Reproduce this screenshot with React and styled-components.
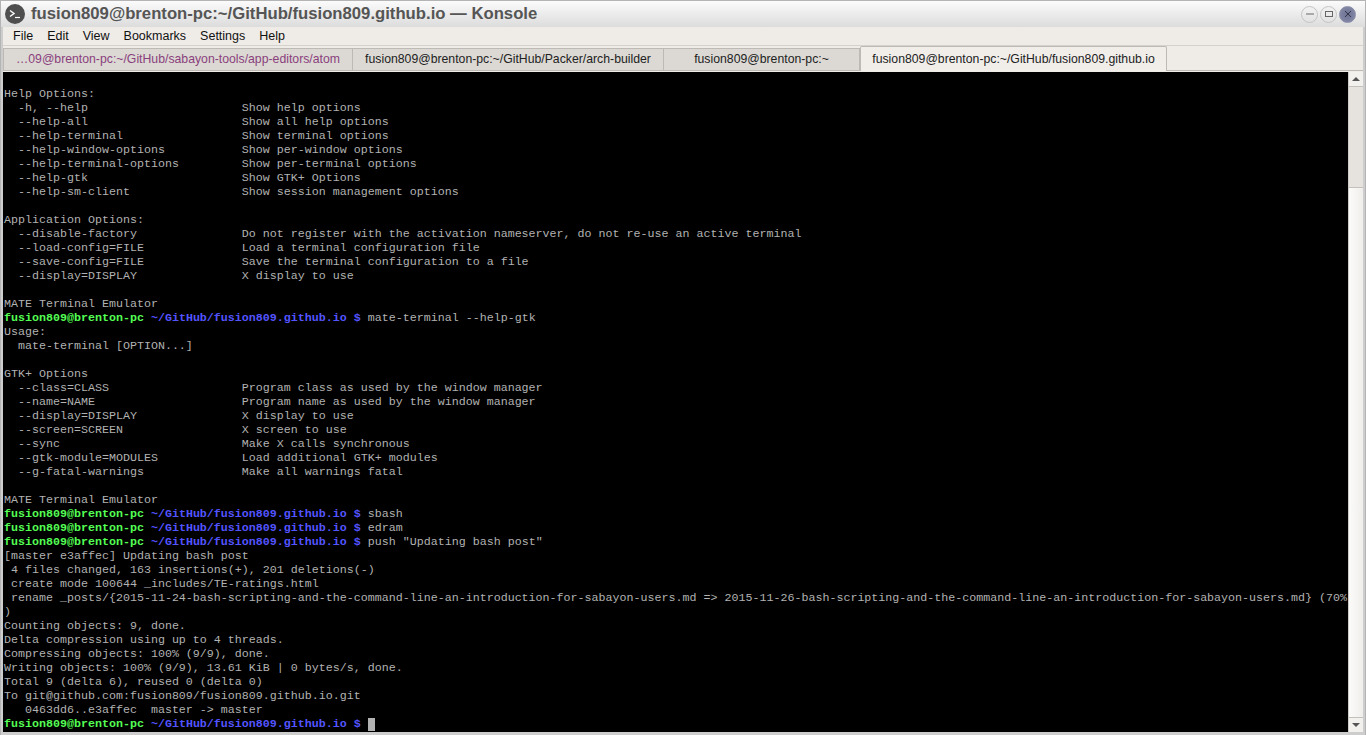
import React from "react";
import styled, { createGlobalStyle } from "styled-components";

const Global = createGlobalStyle`
  html, body {
    margin: 0;
    padding: 0;
    height: 100%;
    overflow: hidden;
    background: #cdcdcd;
  }
  #root {
    height: 100%;
  }
`;

const Window = styled.div`
  box-sizing: border-box;
  width: 1366px;
  height: 735px;
  display: flex;
  flex-direction: column;
  background: #cdcdcd;
  border: solid #b4b4b4;
  border-width: 1px 1px 0 1px;
  font-family: "Liberation Sans", Arial, sans-serif;
`;

const TitleBar = styled.div`
  height: 26px;
  flex: none;
  display: flex;
  align-items: center;
  padding: 0 9px 0 4px;
  background: linear-gradient(#fbfbfb, #dcdcdc);
`;

const TitleText = styled.div`
  flex: 1;
  margin-left: 6px;
  font-size: 16.7px;
  font-weight: 700;
  color: #555;
  white-space: nowrap;
`;

const AppIcon = styled.svg`
  width: 20px;
  height: 20px;
  flex: none;
`;

const WinButtons = styled.div`
  display: flex;
  gap: 2px;
  align-items: center;
`;

const WinButton = styled.div`
  box-sizing: border-box;
  width: 17px;
  height: 17px;
  border-radius: 50%;
  display: flex;
  align-items: center;
  justify-content: center;
  border: 1px solid ${(p) => (p.$active ? "#8a8ea8" : "#c4c4c4")};
  background: ${(p) => (p.$active ? "radial-gradient(#6d7192, #8a8eac)" : "linear-gradient(#f2f2f2, #e2e2e2)")};
`;

const Content = styled.div`
  flex: 1;
  min-height: 0;
  display: flex;
  flex-direction: column;
  margin: 0 2px 3px 2px;
  background: #efebe7;
`;

const MenuBar = styled.div`
  box-sizing: border-box;
  height: 19px;
  flex: none;
  display: flex;
  align-items: center;
  padding: 0 0 1px 10px;
  gap: 14px;
  font-size: 12.5px;
  color: #111;
  border-bottom: 1px solid #d5d1cc;
`;

const TabBar = styled.div`
  height: 25px;
  flex: none;
  display: flex;
  align-items: flex-end;
  font-size: 12.25px;
`;

const Tab = styled.div`
  box-sizing: border-box;
  width: ${(p) => p.$w}px;
  height: ${(p) => (p.$active ? 25 : 23)}px;
  display: flex;
  align-items: center;
  justify-content: center;
  padding-bottom: ${(p) => (p.$active ? 0 : 1)}px;
  white-space: nowrap;
  color: ${(p) => p.$color || "#222"};
  background: ${(p) => (p.$active ? "#f1eeea" : "#dcd9d4")};
  border: 1px solid #bdb9b4;
  border-bottom: ${(p) => (p.$active ? "none" : "1px solid #bdb9b4")};
  border-left: ${(p) => (p.$first || p.$active ? "1px solid #bdb9b4" : "none")};
  border-radius: ${(p) => (p.$active ? "2px 2px 0 0" : "0")};
`;

const TabRest = styled.div`
  flex: 1;
  height: 1px;
  background: #bdb9b4;
`;

const Body = styled.div`
  flex: 1;
  min-height: 0;
  display: flex;
  padding-top: 1px;
`;

const Terminal = styled.pre`
  flex: 1;
  min-width: 0;
  margin: 0;
  padding: 1px 0 0 1px;
  background: #000;
  color: #b2b2b2;
  font-family: "Liberation Mono", "Courier New", monospace;
  font-size: 11.67px;
  line-height: 14px;
  overflow: hidden;
  white-space: pre;
`;

const Line = styled.div`
  height: 14px;
`;

const User = styled.span`
  color: #54ff54;
  font-weight: 700;
`;

const Path = styled.span`
  color: #5454ff;
  font-weight: 700;
`;

const Cursor = styled.span`
  display: inline-block;
  width: 7px;
  height: 13px;
  background: #b2b2b2;
  vertical-align: -4px;
`;

const ScrollBar = styled.div`
  width: 14px;
  flex: none;
  display: flex;
  flex-direction: column;
  background: #e6e2de;
  border-left: 1px solid #cfcbc6;
`;

const ScrollArrow = styled.div`
  height: 14px;
  flex: none;
  display: flex;
  align-items: center;
  justify-content: center;
  background: #f3f1ee;
  border-${(p) => (p.$up ? "bottom" : "top")}: 1px solid #c4c0bb;
`;

const Triangle = styled.div`
  width: 0;
  height: 0;
  border-left: 4px solid transparent;
  border-right: 4px solid transparent;
  border-${(p) => (p.$up ? "bottom" : "top")}: 4px solid #555;
`;

const ScrollTrack = styled.div`
  height: 100px;
  flex: none;
`;

const ScrollThumb = styled.div`
  flex: 1;
  background: linear-gradient(90deg, #fbfbfa, #f0eeeb);
  border-top: 1px solid #c4c0bb;
`;

const Prompt = ({ cmd }) => (
  <>
    <User>fusion809@brenton-pc</User> <Path>~/GitHub/fusion809.github.io $</Path> {cmd}
  </>
);

const output = [
  "",
  "Help Options:",
  "  -h, --help                      Show help options",
  "  --help-all                      Show all help options",
  "  --help-terminal                 Show terminal options",
  "  --help-window-options           Show per-window options",
  "  --help-terminal-options         Show per-terminal options",
  "  --help-gtk                      Show GTK+ Options",
  "  --help-sm-client                Show session management options",
  "",
  "Application Options:",
  "  --disable-factory               Do not register with the activation nameserver, do not re-use an active terminal",
  "  --load-config=FILE              Load a terminal configuration file",
  "  --save-config=FILE              Save the terminal configuration to a file",
  "  --display=DISPLAY               X display to use",
  "",
  "MATE Terminal Emulator",
  { cmd: "mate-terminal --help-gtk" },
  "Usage:",
  "  mate-terminal [OPTION...]",
  "",
  "GTK+ Options",
  "  --class=CLASS                   Program class as used by the window manager",
  "  --name=NAME                     Program name as used by the window manager",
  "  --display=DISPLAY               X display to use",
  "  --screen=SCREEN                 X screen to use",
  "  --sync                          Make X calls synchronous",
  "  --gtk-module=MODULES            Load additional GTK+ modules",
  "  --g-fatal-warnings              Make all warnings fatal",
  "",
  "MATE Terminal Emulator",
  { cmd: "sbash" },
  { cmd: "edram" },
  { cmd: 'push "Updating bash post"' },
  "[master e3affec] Updating bash post",
  " 4 files changed, 163 insertions(+), 201 deletions(-)",
  " create mode 100644 _includes/TE-ratings.html",
  " rename _posts/{2015-11-24-bash-scripting-and-the-command-line-an-introduction-for-sabayon-users.md => 2015-11-26-bash-scripting-and-the-command-line-an-introduction-for-sabayon-users.md} (70%",
  ")",
  "Counting objects: 9, done.",
  "Delta compression using up to 4 threads.",
  "Compressing objects: 100% (9/9), done.",
  "Writing objects: 100% (9/9), 13.61 KiB | 0 bytes/s, done.",
  "Total 9 (delta 6), reused 0 (delta 0)",
  "To git@github.com:fusion809/fusion809.github.io.git",
  "   0463dd6..e3affec  master -> master",
];

const tabs = [
  { w: 350, label: "…09@brenton-pc:~/GitHub/sabayon-tools/app-editors/atom", color: "#8a3f7d", first: true },
  { w: 311, label: "fusion809@brenton-pc:~/GitHub/Packer/arch-builder" },
  { w: 196, label: "fusion809@brenton-pc:~" },
  { w: 307, label: "fusion809@brenton-pc:~/GitHub/fusion809.github.io", active: true },
];

export default function App() {
  return (
    <Window>
      <Global />
      <TitleBar>
        <AppIcon viewBox="0 0 20 20">
          <circle cx="10" cy="10" r="10" fill="#4f4f4f" />
          <path d="M5 6.5l4 3-4 3" stroke="#fff" strokeWidth="1.4" fill="none" />
          <path d="M10 13.5h5" stroke="#fff" strokeWidth="1.2" />
        </AppIcon>
        <TitleText>fusion809@brenton-pc:~/GitHub/fusion809.github.io — Konsole</TitleText>
        <WinButtons>
          <WinButton>
            <svg width="8" height="8" viewBox="0 0 8 8">
              <path d="M0 4h8" stroke="#666" strokeWidth="1" />
            </svg>
          </WinButton>
          <WinButton>
            <svg width="8" height="8" viewBox="0 0 8 8">
              <rect x="0.5" y="1.5" width="7" height="5" fill="none" stroke="#666" />
            </svg>
          </WinButton>
          <WinButton $active>
            <svg width="8" height="8" viewBox="0 0 8 8">
              <path d="M1 1l6 6M7 1l-6 6" stroke="#33354a" strokeWidth="1" />
            </svg>
          </WinButton>
        </WinButtons>
      </TitleBar>
      <Content>
        <MenuBar>
          {["File", "Edit", "View", "Bookmarks", "Settings", "Help"].map((m) => (
            <span key={m}>{m}</span>
          ))}
        </MenuBar>
        <TabBar>
          {tabs.map((t) => (
            <Tab key={t.label} $w={t.w} $color={t.color} $first={t.first} $active={t.active}>
              {t.label}
            </Tab>
          ))}
          <TabRest />
        </TabBar>
        <Body>
          <Terminal>
            {output.map((l, i) => (
              <Line key={i}>{typeof l === "string" ? l : <Prompt cmd={l.cmd} />}</Line>
            ))}
            <Line>
              <Prompt cmd={<Cursor />} />
            </Line>
          </Terminal>
          <ScrollBar>
            <ScrollArrow $up>
              <Triangle $up />
            </ScrollArrow>
            <ScrollTrack />
            <ScrollThumb />
            <ScrollArrow>
              <Triangle />
            </ScrollArrow>
          </ScrollBar>
        </Body>
      </Content>
    </Window>
  );
}
